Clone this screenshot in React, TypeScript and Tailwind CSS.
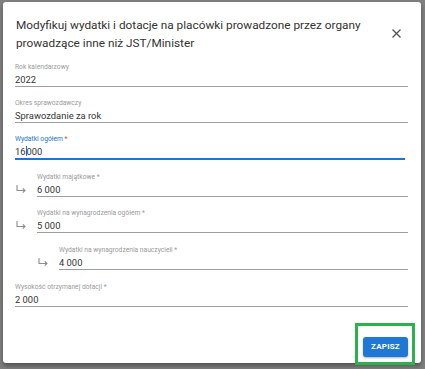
import React from 'react';

const font = { fontFamily: 'Roboto, "Liberation Sans", sans-serif' };

function Arrow() {
  return (
    <svg width="10" height="8" viewBox="0 0 10 8" className="text-[#8c8c8c]">
      <path d="M1 0 V5.5 H8.8" fill="none" stroke="currentColor" strokeWidth="1.1" />
      <path d="M6.8 3.4 L9 5.5 L6.8 7.6" fill="none" stroke="currentColor" strokeWidth="1.1" />
    </svg>
  );
}

type FieldProps = {
  label: string;
  value: React.ReactNode;
  required?: boolean;
  focused?: boolean;
};

function Field({ label, value, required, focused }: FieldProps) {
  return (
    <div className="flex-1">
      <div
        className={
          focused
            ? 'text-[6.7px] leading-[10px] text-[#1976d2]'
            : 'text-[6.7px] leading-[10px] text-[#9a9a9a]'
        }
      >
        {label}
        {required && (
          <span className={focused ? 'text-[#e53935]' : ''}> *</span>
        )}
      </div>
      <div
        className={
          focused
            ? 'mt-[1px] mr-[3px] h-[15px] border-b-2 border-[#1976d2] text-[9.4px] leading-[13px] text-[#333]'
            : 'mt-[1px] h-[14px] border-b border-[#9e9e9e] text-[9.4px] leading-[13px] text-[#333]'
        }
      >
        {value}
      </div>
    </div>
  );
}

export default function App() {
  return (
    <div className="w-[425px] h-[369px] bg-[#7f7f7f] pt-[2px] pl-[3px] overflow-hidden" style={font}>
      <div className="w-[418px] h-[361px] bg-white rounded-[3px] shadow-[0_3px_4px_rgba(0,0,0,0.35)] relative">
        <div className="flex items-start pt-[14px] pl-[13px] pr-[20px]">
          <h2 className="flex-1 text-[11.8px] leading-[18px] text-[#333] font-normal">
            Modyfikuj wydatki i dotacje na placówki prowadzone przez organy prowadzące inne niż JST/Minister
          </h2>
          <button className="mt-[13px] ml-[20px] text-[#555]">
            <svg width="9" height="9" viewBox="0 0 9 9">
              <path d="M0.5 0.5 L8.5 8.5 M8.5 0.5 L0.5 8.5" stroke="currentColor" strokeWidth="1.3" />
            </svg>
          </button>
        </div>

        <div className="mt-[10px] pl-[12px] pr-[13px] flex flex-col gap-[11px]">
          <Field label="Rok kalendarzowy" value="2022" />
          <Field label="Okres sprawozdawczy" value="Sprawozdanie za rok" />
          <Field
            label="Wydatki ogółem"
            required
            focused
            value={
              <span>
                16<span className="inline-block w-[1px] h-[10px] bg-[#1976d2] align-[-1px]" />000
              </span>
            }
          />
          <div className="flex items-end mt-[1px]">
            <div className="w-[22px] pl-[1px] pb-[4px]">
              <Arrow />
            </div>
            <Field label="Wydatki majątkowe" required value="6 000" />
          </div>
          <div className="flex items-end">
            <div className="w-[22px] pl-[1px] pb-[4px]">
              <Arrow />
            </div>
            <Field label="Wydatki na wynagrodzenia ogółem" required value="5 000" />
          </div>
          <div className="flex items-end mt-[1px]">
            <div className="w-[44px] pl-[23px] pb-[4px]">
              <Arrow />
            </div>
            <Field label="Wydatki na wynagrodzenia nauczycieli" required value="4 000" />
          </div>
          <div className="mt-[1px]">
            <Field label="Wysokość otrzymanej dotacji" required value="2 000" />
          </div>
        </div>

        <div className="absolute right-[6px] bottom-[-2px] border-[3px] border-[#2bb24c] pt-[6px] pb-[5px] pl-[5px] pr-[4px]">
          <button className="w-[45px] h-[20px] rounded-[3px] bg-[#1f78d6] text-white text-[8px] font-bold tracking-[0.2px] shadow-[0_1px_2px_rgba(0,0,0,0.3)]">
            ZAPISZ
          </button>
        </div>
      </div>
    </div>
  );
}
